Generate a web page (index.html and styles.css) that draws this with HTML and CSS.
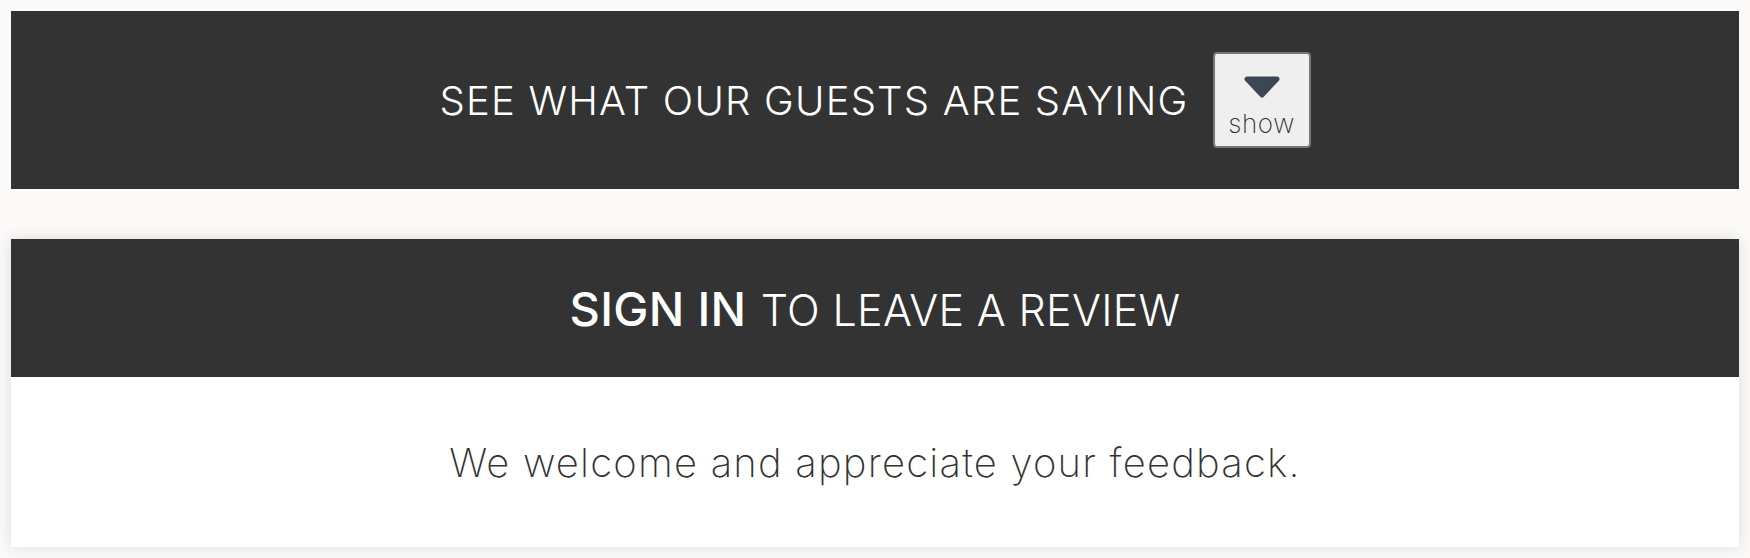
FILE: index.html
```html
<!DOCTYPE html>
<html lang="en">
<head>
  <meta charset="UTF-8">
  <title>Guest Reviews</title>
  <link rel="stylesheet" href="styles.css">
</head>
<body>

  <!-- Reviews toggle -->
  <section class="reviews-bar">
    <h2 class="reviews-title">SEE WHAT OUR GUESTS ARE SAYING</h2>
    <button class="toggle-btn" type="button">
      <svg class="toggle-arrow" width="38" height="24" viewBox="0 0 38 24">
        <polygon points="4,4 34,4 19,20" />
      </svg>
      <span>show</span>
    </button>
  </section>

  <!-- Sign in card -->
  <section class="review-card">
    <div class="review-card-head">
      <h2><strong>SIGN IN</strong> TO LEAVE A REVIEW</h2>
    </div>
    <div class="review-card-body">
      <p>We welcome and appreciate your feedback.</p>
    </div>
  </section>

</body>
</html>
```

FILE: styles.css
```css
body {
  margin: 0;
  padding: 11px;
  background-color: #fbfaf8;
  font-family: Inter, "Open Sans", sans-serif;
  color: #333;
}

.reviews-bar {
  background-color: #333333;
  height: 178px;
  display: flex;
  justify-content: center;
  align-items: center;
  gap: 24px;
}

.reviews-title {
  margin: 0;
  color: white;
  font-size: 40px;
  font-weight: 300;
  letter-spacing: 1.2px;
}

.toggle-btn {
  width: 98px;
  height: 96px;
  padding: 14px 0 0;
  background-color: #efefef;
  border: 2px solid #767676;
  border-radius: 4px;
  display: flex;
  flex-direction: column;
  align-items: center;
  justify-content: center;
  font-family: inherit;
  font-size: 26px;
  font-weight: 200;
  letter-spacing: 0.6px;
  line-height: 30px;
  color: #333;
  cursor: pointer;
}

.toggle-arrow {
  margin-bottom: 10px;
}

.toggle-arrow polygon {
  fill: #3e4655;
  stroke: #3e4655;
  stroke-width: 5;
  stroke-linejoin: round;
}

.review-card {
  margin-top: 50px;
  background-color: white;
  box-shadow: 0 0 14px rgba(0, 0, 0, 0.12);
}

.review-card-head {
  background-color: #333333;
  height: 138px;
  display: flex;
  justify-content: center;
  align-items: center;
}

.review-card-head h2 {
  margin: 0;
  color: white;
  font-size: 43px;
  font-weight: 300;
  letter-spacing: 0.3px;
}

.review-card-head strong {
  font-size: 47px;
  font-weight: 500;
  margin-right: 2px;
}

.review-card-body {
  height: 170px;
  display: flex;
  justify-content: center;
  align-items: center;
}

.review-card-body p {
  margin: 0;
  font-size: 40px;
  font-weight: 200;
  letter-spacing: 1.2px;
  color: #333;
}
```
